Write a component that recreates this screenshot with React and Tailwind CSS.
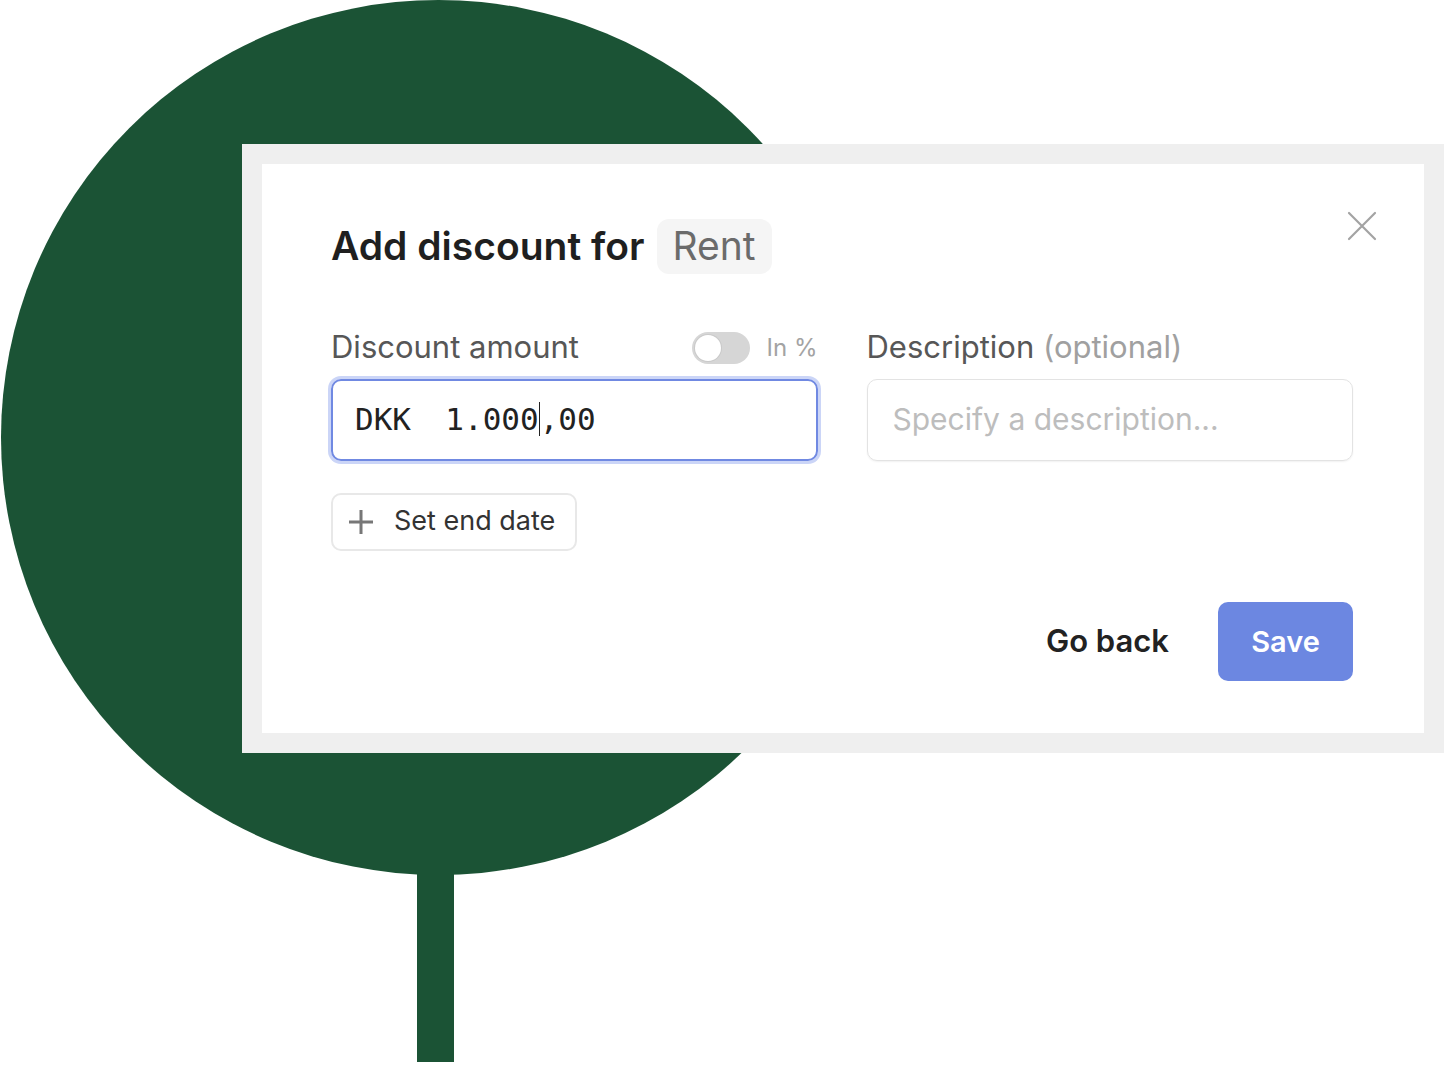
import React from 'react';

const SANS = { fontFamily: 'Inter, "Noto Sans", sans-serif' };

function Toggle({ on = false }) {
  return (
    <div className={`flex h-[32px] w-[58px] items-center rounded-full p-[3px] ${on ? 'bg-[#6c87e1] justify-end' : 'bg-[#d6d6d6] justify-start'}`}>
      <div className="h-[26px] w-[26px] rounded-full bg-white shadow-[0_0_0_1px_rgba(0,0,0,0.06)]" />
    </div>
  );
}

function CloseIcon() {
  return (
    <svg width="30" height="30" viewBox="0 0 30 30" fill="none" stroke="currentColor" strokeWidth="2.2" strokeLinecap="round">
      <path d="M2 2L28 28M28 2L2 28" />
    </svg>
  );
}

function PlusIcon() {
  return (
    <svg width="26" height="26" viewBox="0 0 26 26" fill="none" stroke="currentColor" strokeWidth="3">
      <path d="M13 1V25M1 13H25" />
    </svg>
  );
}

function DiscountDialog() {
  return (
    <div className="flex h-full w-full flex-col border-[20px] border-[#efefef] bg-white" style={SANS}>
      <div className="relative flex flex-1 flex-col pl-[69px] pr-[71px] pt-[53px] pb-[52px]">
        <button className="absolute right-[47px] top-[47px] text-[#a3a3a3]" aria-label="Close">
          <CloseIcon />
        </button>

        <h2 className="flex items-center gap-[12px] text-[39px] font-semibold text-[#1f1f1f]">
          <span>Add discount for</span>
          <span className="flex h-[55px] items-center rounded-[12px] bg-[#f5f5f5] px-[16px] font-normal text-[#6b6b6b]">Rent</span>
        </h2>

        <div className="mt-[55px] grid grid-cols-2 gap-x-[49px]">
          <div className="flex flex-col">
            <div className="flex h-[34px] items-center justify-between">
              <span className="text-[31px] text-[#575757]">Discount amount</span>
              <div className="flex items-center gap-[17px]">
                <Toggle />
                <span className="text-[24px] text-[#a3a3a3]">In %</span>
              </div>
            </div>
            <div className="mt-[14px] flex h-[82px] items-center rounded-[10px] border-2 border-[#7089e2] px-[22px] shadow-[0_0_0_3px_#cbd5f7]">
              <span className="text-[31px] text-[#222]" style={{ fontFamily: '"DejaVu Sans Mono", monospace' }}>
                DKK&nbsp;&nbsp;<span className="-ml-[3px]">1.000</span><span className="inline-block h-[34px] w-[1px] translate-y-[6px] bg-[#222]" />,00
              </span>
            </div>
          </div>

          <div className="flex flex-col">
            <div className="flex h-[34px] items-center">
              <span className="text-[31px] text-[#575757]">
                Description <span className="text-[#a0a0a0]">(optional)</span>
              </span>
            </div>
            <div className="mt-[14px] flex h-[82px] items-center rounded-[10px] border border-[#e3e3e3] px-[25px] shadow-[0_1px_2px_rgba(0,0,0,0.06)]">
              <span className="text-[30px] text-[#bdbdbd]">Specify a description...</span>
            </div>
          </div>
        </div>

        <div className="mt-[32px] flex">
          <button className="flex h-[58px] items-center gap-[20px] rounded-[10px] border-2 border-[#e8e8e8] pl-[15px] pr-[20px] text-[27px] text-[#333]">
            <span className="text-[#777]"><PlusIcon /></span>
            <span>Set end date</span>
          </button>
        </div>

        <div className="mt-auto flex items-center justify-end gap-[49px]">
          <button className="text-[31px] font-semibold text-[#222]">Go back</button>
          <button className="flex h-[79px] w-[135px] items-center justify-center rounded-[10px] bg-[#6c87e1] text-[29px] font-semibold text-white">
            Save
          </button>
        </div>
      </div>
    </div>
  );
}

export default function App() {
  return (
    <div className="relative h-[1066px] w-[1444px] overflow-hidden bg-white">
      {/* green lollipop backdrop */}
      <div className="absolute left-[1px] top-0 h-[875px] w-[875px] rounded-full bg-[#1b5335]" />
      <div className="absolute left-[417px] top-[800px] h-[262px] w-[37px] bg-[#1b5335]" />

      <div className="absolute left-[242px] top-[144px] h-[609px] w-[1202px]">
        <DiscountDialog />
      </div>
    </div>
  );
}
